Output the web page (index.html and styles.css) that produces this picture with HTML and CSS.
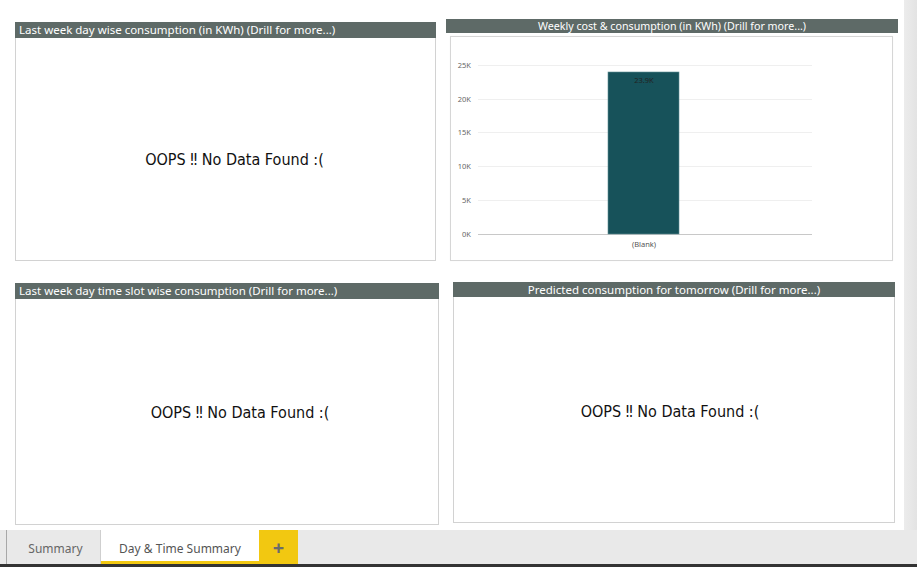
FILE: index.html
```html
<!DOCTYPE html>
<html>
<head>
<meta charset="utf-8">
<link rel="stylesheet" href="styles.css">
</head>
<body>
<div class="app">
  <div class="main">
    <div class="canvas">
      <div class="row row-top">
        <section class="panel p1">
          <div class="hdr left">Last week day wise consumption (in KWh) (Drill for more...)</div>
          <div class="body"><span class="oops">OOPS ‼ No Data Found :(</span></div>
        </section>
        <section class="panel p2">
          <div class="hdr center">Weekly cost &amp; consumption (in KWh) (Drill for more...)</div>
          <div class="chartbox">
            <svg class="chart" width="443" height="225" viewBox="0 0 443 225">
              <g class="grid">
                <line x1="28" y1="29.5" x2="362" y2="29.5"/>
                <line x1="28" y1="63.5" x2="362" y2="63.5"/>
                <line x1="28" y1="96.5" x2="362" y2="96.5"/>
                <line x1="28" y1="130.5" x2="362" y2="130.5"/>
                <line x1="28" y1="164.5" x2="362" y2="164.5"/>
              </g>
              <line class="axis" x1="28" y1="198.5" x2="362" y2="198.5"/>
              <g class="ylab">
                <text x="21" y="32">25K</text>
                <text x="21" y="66">20K</text>
                <text x="21" y="99">15K</text>
                <text x="21" y="133">10K</text>
                <text x="21" y="167">5K</text>
                <text x="21" y="201">0K</text>
              </g>
              <rect class="bar" x="158" y="36" width="71" height="162"/>
              <text class="dlab" x="194" y="47">23.9K</text>
              <text class="xlab" x="194" y="211">(Blank)</text>
            </svg>
          </div>
        </section>
      </div>
      <div class="row row-bottom">
        <section class="panel p3">
          <div class="hdr left">Last week day time slot wise consumption (Drill for more...)</div>
          <div class="body"><span class="oops">OOPS ‼ No Data Found :(</span></div>
        </section>
        <section class="panel p4">
          <div class="hdr center">Predicted consumption for tomorrow (Drill for more...)</div>
          <div class="body"><span class="oops">OOPS ‼ No Data Found :(</span></div>
        </section>
      </div>
    </div>
    <div class="scrollbar"></div>
  </div>
  <div class="tabbar">
    <div class="tab">Summary</div>
    <div class="tab active">Day &amp; Time Summary</div>
    <div class="tab add">+</div>
  </div>
</div>
</body>
</html>
```
FILE: styles.css
```css
* { box-sizing: border-box; }
html, body { margin: 0; padding: 0; }
body {
  width: 917px;
  height: 567px;
  overflow: hidden;
  background: #fff;
  font-family: "Noto Sans", "Open Sans", sans-serif;
}
.app { display: flex; flex-direction: column; height: 567px; }
.main { display: flex; height: 530px; }
.canvas { width: 904px; display: flex; flex-direction: column; }
.scrollbar {
  width: 13px;
  height: 530px;
  background: linear-gradient(to right, #ececec, #e3e3e3);
}
.row { display: flex; align-items: flex-start; }
.row-top { height: 261px; padding-top: 19px; padding-left: 15px; }
.row-bottom { padding-left: 15px; margin-top: 21px; }

.panel { display: flex; flex-direction: column; }
.hdr {
  background: #5e6a67;
  color: #fff;
  font-size: 11.5px;
  line-height: 16px;
  height: 16px;
  white-space: nowrap;
  overflow: hidden;
}
.hdr.left { padding-left: 4px; }
.hdr.center { text-align: center; }
.body {
  flex: 1;
  border: 1px solid #d2d2d2;
  border-top: none;
  display: flex;
  align-items: center;
  justify-content: center;
}
.oops {
  font-family: "DejaVu Sans Condensed", "Roboto", sans-serif;
  font-size: 16px;
  color: #111;
}

.p1 { width: 421px; height: 239px; margin-top: 3px; }
.p1 .body { padding-left: 18px; padding-top: 20px; }
.p2 { width: 452px; height: 242px; margin-left: 10px; }
.p2 .hdr { height: 14px; line-height: 14px; font-size: 10.7px; }
.chartbox {
  margin: 3px 5px 0 4px;
  height: 225px;
  border: 1px solid #d6d6d6;
  box-shadow: 0 0 1px rgba(0,0,0,0.05);
}
.chart { display: block; margin: -1px; }
.grid line { stroke: #efefef; stroke-width: 1; }
.axis { stroke: #c8c8c8; stroke-width: 1; }
.ylab text { font-size: 7.5px; fill: #666; text-anchor: end; font-family: "Noto Sans", sans-serif; }
.bar { fill: #17525a; stroke: #5f8e93; stroke-width: 0.6; }
.dlab { font-size: 7.5px; fill: #222; text-anchor: middle; font-family: "Noto Sans", sans-serif; }
.xlab { font-size: 7.5px; fill: #555; text-anchor: middle; font-family: "Noto Sans", sans-serif; }

.p3 { width: 424px; height: 242px; margin-top: 1px; }
.p3 .body { padding-left: 26px; padding-top: 2px; }
.p4 { width: 442px; height: 241px; margin-left: 14px; }
.p4 .hdr { height: 15px; line-height: 15px; }
.p4 .body { padding-top: 4px; padding-right: 8px; }

.tabbar {
  height: 37px;
  background: #e9e9e9;
  border-bottom: 3px solid #333;
  display: flex;
  padding-left: 6px;
}
.tab {
  font-family: "Noto Sans", "Open Sans", sans-serif;
  font-size: 12px;
  color: #666;
  display: flex;
  align-items: center;
  justify-content: center;
  height: 34px;
  padding-top: 3px;
}
.tab:first-child {
  width: 95px;
  border-left: 1px solid #a8a8a8;
  border-right: 1px solid #cfcfcf;
  padding-left: 4px;
}
.tab.active {
  width: 158px;
  background: #fff;
  color: #555;
  border-bottom: 3px solid #f2c811;
  padding-top: 6px;
}
.tab.add {
  width: 39px;
  background: #f2c811;
  color: #6b6b6b;
  font-size: 20px;
  font-weight: bold;
  padding-top: 0;
}
```
